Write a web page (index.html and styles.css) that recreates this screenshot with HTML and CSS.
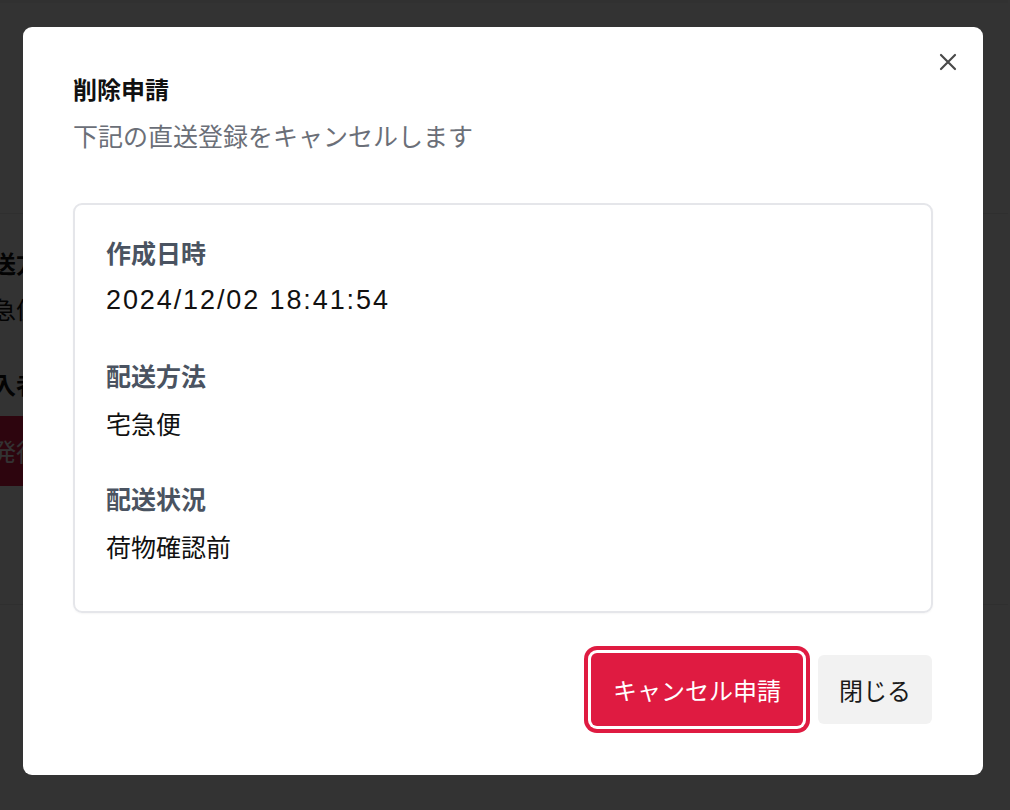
FILE: index.html
```html
<!DOCTYPE html>
<html lang="ja">
<head>
    <meta charset="UTF-8">
    <meta name="viewport" content="width=device-width, initial-scale=1.0">
    <title>削除申請</title>
    <link rel="stylesheet" href="styles.css">
</head>
<body>
    <!-- page behind the dialog -->
    <div class="page">
        <div class="page-top"></div>
        <div class="page-section">
            <div class="page-label">配送方法</div>
            <div class="page-value">宅急便</div>
            <div class="page-label page-label-2">購入者</div>
            <div class="page-button">発行</div>
        </div>
    </div>

    <div class="overlay">
        <div class="modal">
            <button class="modal-close" aria-label="閉じる">
                <svg width="18" height="18" viewBox="0 0 18 18">
                    <path d="M2 2 L16 16 M16 2 L2 16" stroke="#4a4a4a" stroke-width="2.2" stroke-linecap="round" fill="none"/>
                </svg>
            </button>

            <h2 class="modal-title">削除申請</h2>
            <p class="modal-desc">下記の直送登録をキャンセルします</p>

            <div class="detail-card">
                <div class="detail-item">
                    <div class="detail-label">作成日時</div>
                    <div class="detail-value detail-date">2024/12/02 18:41:54</div>
                </div>
                <div class="detail-item">
                    <div class="detail-label">配送方法</div>
                    <div class="detail-value">宅急便</div>
                </div>
                <div class="detail-item">
                    <div class="detail-label">配送状況</div>
                    <div class="detail-value">荷物確認前</div>
                </div>
            </div>

            <div class="modal-actions">
                <button class="btn btn-danger">キャンセル申請</button>
                <button class="btn btn-light">閉じる</button>
            </div>
        </div>
    </div>
</body>
</html>
```

FILE: styles.css
```css
* {
    box-sizing: border-box;
}
body {
    margin: 0;
    font-family: "Noto Sans CJK JP", "Noto Sans", sans-serif;
    background-color: #ffffff;
    color: #111111;
}

/* page behind */
.page {
    margin-left: -32px;
    width: 1040px;
}
.page-top {
    height: 213px;
    border-top: 3px solid #f4f4f4;
}
.page-section {
    height: 392px;
    border-top: 1px solid #e8e8e8;
    border-bottom: 1px solid #e8e8e8;
    padding-top: 31px;
    font-size: 24px;
}
.page-label {
    font-weight: bold;
    line-height: 36px;
}
.page-value {
    line-height: 36px;
    margin-top: 10px;
}
.page-label-2 {
    margin-top: 39px;
}
.page-button {
    margin-top: 14px;
    height: 70px;
    width: 220px;
    padding-left: 24px;
    line-height: 70px;
    background-color: #e11d48;
    color: #ffffff;
}

/* dialog */
.overlay {
    position: fixed;
    inset: 0;
    background-color: rgba(0, 0, 0, 0.8);
    padding: 27px 27px 35px 23px;
}
.modal {
    position: relative;
    width: 960px;
    height: 748px;
    background-color: #ffffff;
    border-radius: 9px;
    padding: 44px 50px 51px 50px;
}
.modal-close {
    position: absolute;
    top: 26px;
    right: 26px;
    width: 18px;
    height: 18px;
    padding: 0;
    border: none;
    background: none;
    cursor: pointer;
}
.modal-close svg {
    display: block;
}
.modal-title {
    margin: 0;
    font-size: 24px;
    line-height: 36px;
    font-weight: bold;
    color: #111111;
}
.modal-desc {
    margin: 10px 0 0 0;
    font-size: 25px;
    line-height: 36px;
    color: #6b6f78;
}
.detail-card {
    margin-top: 50px;
    height: 410px;
    border: 2px solid #e5e6ea;
    border-radius: 9px;
    padding: 29px 31px 47px 31px;
    display: flex;
    flex-direction: column;
    gap: 39px;
    box-shadow: 0 1px 2px rgba(0, 0, 0, 0.04);
}
.detail-item {
    display: flex;
    flex-direction: column;
    gap: 12px;
}
.detail-label {
    font-size: 25px;
    line-height: 36px;
    font-weight: bold;
    color: #4a5361;
}
.detail-value {
    font-size: 25px;
    line-height: 36px;
    color: #111111;
}
.detail-date {
    font-family: "Liberation Sans", sans-serif;
    font-size: 27px;
    letter-spacing: 1.9px;
}
.modal-actions {
    margin-top: 40px;
    display: flex;
    justify-content: flex-end;
    align-items: center;
    gap: 15px;
    padding-right: 1px;
}
.btn {
    font-family: "Noto Sans CJK JP", "Noto Sans", sans-serif;
    font-size: 24px;
    border: none;
    border-radius: 6px;
    cursor: pointer;
    padding: 0 21px;
}
.btn-danger {
    height: 73px;
    padding: 0 22px;
    background-color: #df1b41;
    color: #ffffff;
    box-shadow: 0 0 0 3px #ffffff, 0 0 0 7px #df1b41;
}
.btn-light {
    height: 69px;
    background-color: #f2f2f2;
    color: #1a1a1a;
}
```
